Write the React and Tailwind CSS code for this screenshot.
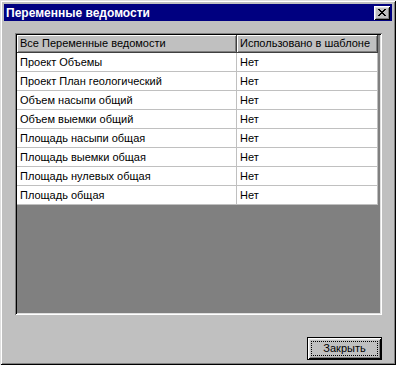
import React from "react";

const rows = [
  "Проект Объемы",
  "Проект План геологический",
  "Объем насыпи общий",
  "Объем выемки общий",
  "Площадь насыпи общая",
  "Площадь выемки общая",
  "Площадь нулевых общая",
  "Площадь общая",
];

function CloseGlyph() {
  // 8x7 pixel cross, like the classic caption button
  const px = [
    [0, 0], [1, 0], [6, 0], [7, 0],
    [1, 1], [2, 1], [5, 1], [6, 1],
    [2, 2], [3, 2], [4, 2], [5, 2],
    [3, 3], [4, 3],
    [2, 4], [3, 4], [4, 4], [5, 4],
    [1, 5], [2, 5], [5, 5], [6, 5],
    [0, 6], [1, 6], [6, 6], [7, 6],
  ];
  return (
    <svg width="8" height="7" viewBox="0 0 8 7" shapeRendering="crispEdges">
      {px.map(([x, y]) => (
        <rect key={x + "-" + y} x={x} y={y} width="1" height="1" fill="#000" />
      ))}
    </svg>
  );
}

export default function App() {
  return (
    <div
      className="w-[396px] h-[365px] bg-[#c0c0c0] p-[4px] flex flex-col text-black text-[11px] shadow-[inset_1px_1px_#dfdfdf,inset_-1px_-1px_#000,inset_2px_2px_#fff,inset_-2px_-2px_#808080]"
      style={{ fontFamily: '"Liberation Sans", Arial, sans-serif' }}
    >
      {/* caption */}
      <div className="h-[17px] bg-[#000080] flex items-center justify-between pl-[2px] pr-[2px]">
        <span className="text-white font-bold text-[12px] leading-none">Переменные ведомости</span>
        <button className="w-[16px] h-[14px] bg-[#c0c0c0] flex items-center justify-center shadow-[inset_1px_1px_#fff,inset_-1px_-1px_#000,inset_2px_2px_#dfdfdf,inset_-2px_-2px_#808080]">
          <CloseGlyph />
        </button>
      </div>

      <div className="flex-1 flex flex-col pl-[11px] pr-[10px] pt-[12px]">
        {/* grid */}
        <div className="h-[282px] bg-[#808080] p-[2px] shadow-[inset_1px_1px_#808080,inset_-1px_-1px_#fff,inset_2px_2px_#000,inset_-2px_-2px_#dfdfdf]">
          <div className="w-[361px]">
            <div className="flex h-[18px]">
              <div className="w-[220px] bg-[#c0c0c0] pl-[3px] leading-[17px] border-r border-b border-[#404040] shadow-[inset_1px_1px_#fff,inset_-1px_-1px_#808080]">
                Все Переменные ведомости
              </div>
              <div className="flex-1 bg-[#c0c0c0] pl-[3px] leading-[17px] border-r border-b border-[#404040] shadow-[inset_1px_1px_#fff,inset_-1px_-1px_#808080]">
                Использовано в шаблоне
              </div>
            </div>
            {rows.map((r) => (
              <div key={r} className="flex h-[19px] bg-white">
                <div className="w-[220px] pl-[3px] leading-[18px] border-r border-b border-[#c0c0c0]">{r}</div>
                <div className="flex-1 pl-[3px] leading-[18px] border-r border-b border-[#c0c0c0]">Нет</div>
              </div>
            ))}
          </div>
        </div>

        {/* footer */}
        <div className="flex justify-end pt-[22px]">
          <button className="w-[75px] h-[23px] border border-black bg-[#c0c0c0] p-[3px] shadow-[inset_1px_1px_#fff,inset_-1px_-1px_#000,inset_2px_2px_#dfdfdf,inset_-2px_-2px_#808080]">
            <div className="h-full border border-dotted border-black flex items-center justify-center leading-none">
              Закрыть
            </div>
          </button>
        </div>
      </div>
    </div>
  );
}
